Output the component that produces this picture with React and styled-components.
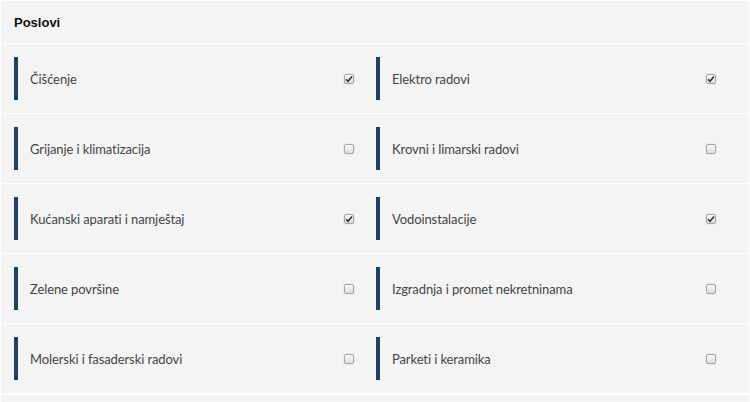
import React from 'react';
import styled, { createGlobalStyle } from 'styled-components';

const GlobalStyle = createGlobalStyle`
  body {
    margin: 0;
    background: #fff;
    font-family: 'Liberation Sans', Arial, sans-serif;
  }
`;

const jobs = [
  { name: "Čišćenje", checked: true },
  { name: "Elektro radovi", checked: true },
  { name: "Grijanje i klimatizacija", checked: false },
  { name: "Krovni i limarski radovi", checked: false },
  { name: "Kućanski aparati i namještaj", checked: true },
  { name: "Vodoinstalacije", checked: true },
  { name: "Zelene površine", checked: false },
  { name: "Izgradnja i promet nekretninama", checked: false },
  { name: "Molerski i fasaderski radovi", checked: false },
  { name: "Parketi i keramika", checked: false },
];

const Page = styled.div`
  padding: 1px 1px 0 1px;
`;

const Panel = styled.section`
  background: #f4f4f4;
`;

const Header = styled.h3`
  margin: 0;
  height: 42px;
  display: flex;
  align-items: center;
  padding-left: 13px;
  padding-top: 1px;
  box-sizing: border-box;
  font-size: 13px;
  font-weight: bold;
  color: #111;
`;

const Row = styled.div`
  display: grid;
  grid-template-columns: 362px 362px;
  border-top: 1px solid #fff;
  height: 69px;
`;

const Cell = styled.label`
  display: flex;
  align-items: center;
  padding: 0 9px 0 13px;
`;

const Bar = styled.span`
  width: 4px;
  height: 43px;
  background: #1e4262;
  flex-shrink: 0;
`;

const Label = styled.span`
  flex: 1;
  margin-left: 12px;
  font-family: Lato, 'Open Sans', sans-serif;
  font-size: 13px;
  letter-spacing: -0.1px;
  color: #444;
`;

const Box = styled.span`
  width: 8px;
  height: 8px;
  border: 1px solid #a6a6a6;
  border-radius: 2px;
  background: linear-gradient(#fafafa, #dcdcdc);
  display: flex;
  align-items: center;
  justify-content: center;
  box-shadow: 0 0 0 1px rgba(0, 0, 0, 0.04);
`;

const NextPanel = styled.div`
  background: #f4f4f4;
  height: 9px;
  margin-top: 2px;
`;

const Check = ({ checked }) => (
  <Box>
    {checked && (
      <svg width="8" height="8" viewBox="0 0 8 8">
        <path d="M1 4.3 L3 6.3 L7 1.5" fill="none" stroke="#333" strokeWidth="1.6" />
      </svg>
    )}
  </Box>
);

const App = () => {
  const rows = [];
  for (let i = 0; i < jobs.length; i += 2) rows.push(jobs.slice(i, i + 2));
  return (
    <Page>
      <GlobalStyle />
      <Panel>
        <Header>Poslovi</Header>
        {rows.map((pair, i) => (
          <Row key={i}>
            {pair.map((job) => (
              <Cell key={job.name}>
                <Bar />
                <Label>{job.name}</Label>
                <Check checked={job.checked} />
              </Cell>
            ))}
          </Row>
        ))}
      </Panel>
      <NextPanel />
    </Page>
  );
};

export default App;
